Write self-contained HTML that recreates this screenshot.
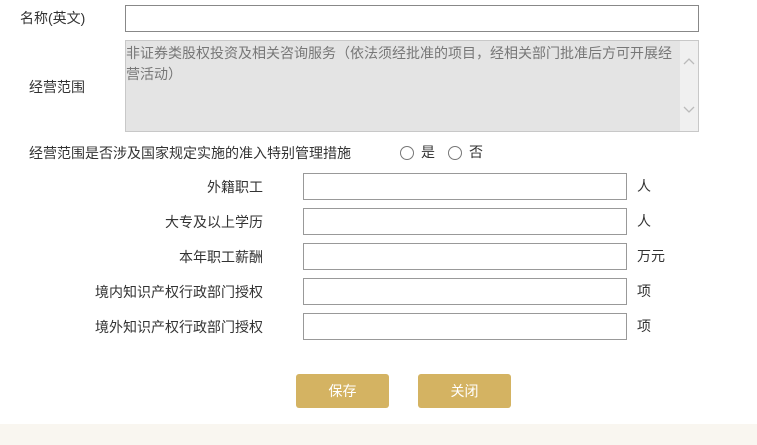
<!DOCTYPE html><html><head><meta charset="utf-8"><style>
body{margin:0;width:757px;height:445px;background:#fff;position:relative;overflow:hidden;font-family:"Liberation Sans","Noto Sans CJK SC",sans-serif;font-size:14px;color:#333}
.a{position:absolute;white-space:nowrap;line-height:16px}
.in{position:absolute;border:1px solid #999;background:#fff;box-sizing:border-box}
.btn{position:absolute;width:93px;height:34px;top:374px;background:#d4b362;border-radius:3px;color:#fff;text-align:center;line-height:34px}
.r{position:absolute;width:12px;height:12px;border:1px solid #777;border-radius:50%;top:146px}
</style></head><body>
<div class="a" style="left:20px;top:10px">名称(英文)</div>
<div class="in" style="left:125px;top:5px;width:574px;height:27px;border-color:#888"></div>
<div class="a" style="left:29px;top:79px">经营范围</div>
<div class="in" style="left:125px;top:40px;width:574px;height:92px;background:#e4e4e4;border-color:#c8c8c8"></div>
<div style="position:absolute;left:680px;top:41px;width:18px;height:90px;background:#f0f0f0"></div>
<svg style="position:absolute;left:682px;top:55px" width="14" height="62"><path d="M2 9l5-5 5 5M2 52l5 5 5-5" stroke="#bbb" fill="none" stroke-width="1.3"/></svg>
<div class="a" style="left:126px;top:43px;color:#777;line-height:21px;width:552px;white-space:normal">非证券类股权投资及相关咨询服务（依法须经批准的项目，经相关部门批准后方可开展经营活动）</div>
<div class="a" style="left:29px;top:145px">经营范围是否涉及国家规定实施的准入特别管理措施</div>
<div class="r" style="left:400px"></div><div class="a" style="left:421px;top:144px">是</div>
<div class="r" style="left:448px"></div><div class="a" style="left:469px;top:144px">否</div>
<div class="a" style="left:207px;top:179px">外籍职工</div>
<div class="a" style="left:165px;top:214px">大专及以上学历</div>
<div class="a" style="left:179px;top:249px">本年职工薪酬</div>
<div class="a" style="left:95px;top:284px">境内知识产权行政部门授权</div>
<div class="a" style="left:95px;top:319px">境外知识产权行政部门授权</div>
<div class="in" style="left:303px;top:173px;width:324px;height:27px"></div>
<div class="in" style="left:303px;top:208px;width:324px;height:27px"></div>
<div class="in" style="left:303px;top:243px;width:324px;height:27px"></div>
<div class="in" style="left:303px;top:278px;width:324px;height:27px"></div>
<div class="in" style="left:303px;top:313px;width:324px;height:27px"></div>
<div class="a" style="left:637px;top:178px">人</div>
<div class="a" style="left:637px;top:213px">人</div>
<div class="a" style="left:637px;top:248px">万元</div>
<div class="a" style="left:637px;top:283px">项</div>
<div class="a" style="left:637px;top:318px">项</div>
<div class="btn" style="left:296px">保存</div>
<div class="btn" style="left:418px">关闭</div>
<div style="position:absolute;left:0;top:424px;width:757px;height:21px;background:#f9f6f0"></div>
</body></html>
